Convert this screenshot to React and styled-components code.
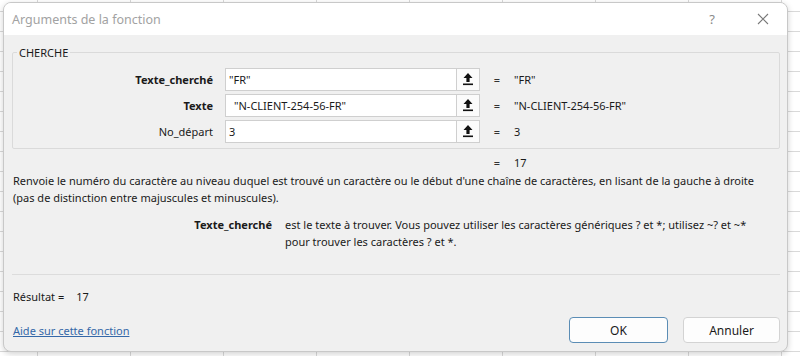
import React from 'react';
import styled, { createGlobalStyle } from 'styled-components';

const GlobalStyle = createGlobalStyle`
  html, body {
    margin: 0;
    padding: 0;
    width: 800px;
    height: 356px;
    overflow: hidden;
    font-family: "Noto Sans", "Open Sans", sans-serif;
  }
  #root {
    width: 800px;
    height: 356px;
  }
`

// excel sheet visible behind the dialog
const Sheet = styled.div`
  width: 800px;
  height: 356px;
  box-sizing: border-box;
  padding: 2px 12px 4px 3px;
  background-color: #fff;
  background-image:
    repeating-linear-gradient(90deg, transparent 0 37px, #d9d9d9 37px 38px, transparent 38px 93px),
    repeating-linear-gradient(180deg, transparent 0 11px, #d9d9d9 11px 12px, transparent 12px 20px);
`

const Dialog = styled.div`
  width: 785px;
  height: 350px;
  border-radius: 8px;
  overflow: hidden;
  background: #f0f0f0;
  border: 1px solid #c8c8c8;
  box-sizing: border-box;
  box-shadow: 0 2px 6px rgba(0, 0, 0, 0.18);
  display: flex;
  flex-direction: column;
`

const TitleBar = styled.div`
  height: 32px;
  flex: none;
  background: #fff;
  display: flex;
  align-items: center;
  padding: 0 0 0 8px;
  color: #a2a2a2;
  font-size: 12.5px;
`

const Title = styled.div`
  flex: 1;
  padding-top: 1px;
`

const TitleButton = styled.div`
  width: ${p => p.w}px;
  display: flex;
  justify-content: center;
  align-items: center;
  color: #8a8a8a;
  font-size: 13px;
`

const Body = styled.div`
  flex: 1;
  display: flex;
  flex-direction: column;
  padding: 0 7px 0 8px;
  font-size: 11px;
  color: #1a1a1a;
`

const Group = styled.fieldset`
  margin: 10px 0 0 0;
  padding: 6px 0 4px 0;
  border: 1px solid #dadada;
  border-radius: 2px;
  min-inline-size: 0;
`

const Legend = styled.legend`
  padding: 0 2px;
  margin-left: 4px;
  font-size: 11px;
  color: #1a1a1a;
`

const ArgRow = styled.div`
  display: grid;
  grid-template-columns: 200px 255px 10px 1fr;
  column-gap: 12px;
  align-items: center;
  height: 26px;
`

const ArgLabel = styled.div`
  text-align: right;
  font-weight: ${p => (p.bold ? 700 : 400)};
`

const Field = styled.div`
  height: 23px;
  display: flex;
  border: 1px solid #cfcfcf;
  background: #fff;
  box-sizing: border-box;
`

const FieldInput = styled.div`
  flex: 1;
  display: flex;
  align-items: center;
  padding-left: ${p => p.indent}px;
`

const PickButton = styled.div`
  width: 22px;
  border-left: 1px solid #cfcfcf;
  display: flex;
  align-items: center;
  justify-content: center;
  background: #fbfbfb;
`

const Equals = styled.div`
  text-align: center;
  color: #333;
`

const TotalRow = styled.div`
  display: grid;
  grid-template-columns: 468px 10px 1fr;
  column-gap: 12px;
  height: 19px;
  align-items: center;
  margin-top: 4px;
`

const Description = styled.p`
  margin: 0;
  line-height: 17px;
  padding-left: 1px;
`

const ArgHelp = styled.div`
  display: grid;
  grid-template-columns: 260px 1fr;
  column-gap: 13px;
  margin-top: 10px;
  line-height: 17px;
`

const HelpName = styled.div`
  text-align: right;
  font-weight: 700;
`

const Separator = styled.div`
  margin-top: auto;
  height: 1px;
  flex: none;
  background: #dcdcdc;
`

const Result = styled.div`
  display: flex;
  gap: 12px;
  height: 42px;
  flex: none;
  align-items: center;
  padding-left: 1px;
`

const Footer = styled.div`
  display: flex;
  align-items: center;
  height: 26px;
  flex: none;
  margin-bottom: 8px;
`

const HelpLink = styled.a`
  color: #3568a8;
  text-decoration: underline;
  flex: 1;
  padding-left: 1px;
`

const Button = styled.button`
  width: ${p => p.w}px;
  height: 26px;
  margin-left: ${p => p.gap || 0}px;
  background: #fdfdfd;
  border: 1px solid ${p => (p.primary ? '#5b8db5' : '#d3d3d3')};
  border-radius: 4px;
  font-family: inherit;
  font-size: 12px;
  color: #1a1a1a;
`

const UpIcon = () => (
  <svg width="12" height="14" viewBox="0 0 12 14">
    <path d="M6 1 L10.5 6 H7.6 V10 H4.4 V6 H1.5 Z" fill="#111" />
    <rect x="1" y="11.5" width="10" height="1.6" fill="#111" />
  </svg>
)

const CloseIcon = () => (
  <svg width="12" height="12" viewBox="0 0 12 12">
    <path d="M1 1 L11 11 M11 1 L1 11" stroke="#7a7a7a" strokeWidth="1.1" />
  </svg>
)

const args = [
  { name: 'Texte_cherché', bold: true, input: '"FR"', value: '"FR"', indent: 3 },
  { name: 'Texte', bold: true, input: '"N-CLIENT-254-56-FR"', value: '"N-CLIENT-254-56-FR"', indent: 8 },
  { name: 'No_départ', bold: false, input: '3', value: '3', indent: 3 },
]

export default function App() {
  return (
    <>
      <GlobalStyle />
      <Sheet>
        <Dialog>
          <TitleBar>
            <Title>Arguments de la fonction</Title>
            <TitleButton w={54}>?</TitleButton>
            <TitleButton w={48}><CloseIcon /></TitleButton>
          </TitleBar>
          <Body>
            <Group>
              <Legend>CHERCHE</Legend>
              {args.map(a => (
                <ArgRow key={a.name}>
                  <ArgLabel bold={a.bold}>{a.name}</ArgLabel>
                  <Field>
                    <FieldInput indent={a.indent}>{a.input}</FieldInput>
                    <PickButton><UpIcon /></PickButton>
                  </Field>
                  <Equals>=</Equals>
                  <span>{a.value}</span>
                </ArgRow>
              ))}
            </Group>
            <TotalRow>
              <span />
              <Equals>=</Equals>
              <span>17</span>
            </TotalRow>
            <Description>
              Renvoie le numéro du caractère au niveau duquel est trouvé un caractère ou le début d'une chaîne de caractères, en lisant de la gauche à droite
              <br />
              (pas de distinction entre majuscules et minuscules).
            </Description>
            <ArgHelp>
              <HelpName>Texte_cherché</HelpName>
              <div>
                est le texte à trouver. Vous pouvez utiliser les caractères génériques ? et *; utilisez ~? et ~*
                <br />
                pour trouver les caractères ? et *.
              </div>
            </ArgHelp>
            <Separator />
            <Result>
              <span>Résultat =</span>
              <span>17</span>
            </Result>
            <Footer>
              <HelpLink>Aide sur cette fonction</HelpLink>
              <Button primary w={99}>OK</Button>
              <Button w={97} gap={15}>Annuler</Button>
            </Footer>
          </Body>
        </Dialog>
      </Sheet>
    </>
  )
}
